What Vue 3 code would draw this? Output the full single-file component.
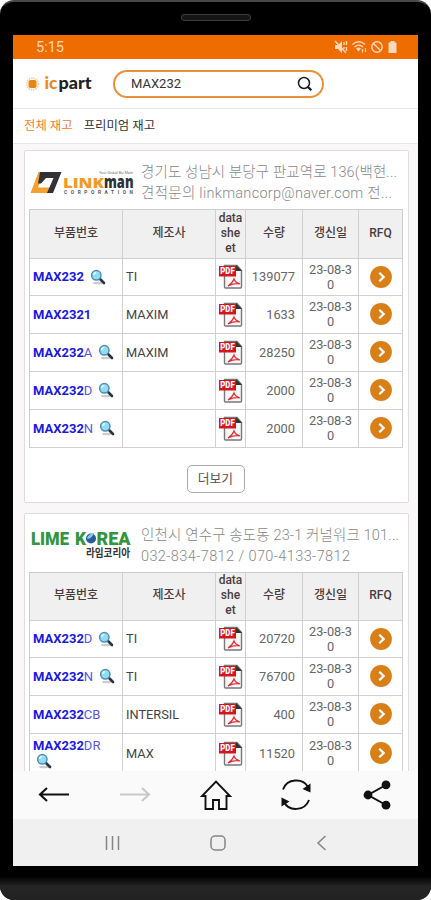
<script setup>
const columns = [['부품번호'], ['제조사'], ['data', 'she', 'et'], ['수량'], ['갱신일'], ['RFQ']]
const suppliers = [
  {
    id: 'linkman',
    lines: ['경기도 성남시 분당구 판교역로 136(백현...', '견적문의 linkmancorp@naver.com 전...'],
    widths: [256, 251],
    more: true,
    rows: [
      { suffix: '', zoom: true, maker: 'TI', qty: '139077' },
      { suffix: '1', bold: true, maker: 'MAXIM', qty: '1633' },
      { suffix: 'A', zoom: true, maker: 'MAXIM', qty: '28250' },
      { suffix: 'D', zoom: true, maker: '', qty: '2000' },
      { suffix: 'N', zoom: true, maker: '', qty: '2000' }
    ]
  },
  {
    id: 'lime',
    lines: ['인천시 연수구 송도동 23-1 커널워크 101...', '032-834-7812 / 070-4133-7812'],
    widths: [258, 209],
    rows: [
      { suffix: 'D', zoom: true, maker: 'TI', qty: '20720' },
      { suffix: 'N', zoom: true, maker: 'TI', qty: '76700' },
      { suffix: 'CB', maker: 'INTERSIL', qty: '400' },
      { suffix: 'DR', zoom: true, maker: 'MAX', qty: '11520' }
    ]
  }
]
</script>

<template>
  <div class="phone">
    <div class="bezel"><span class="speaker"></span></div>
    <div class="screen">
      <div class="status">
        <span class="clock">5:15</span>
        <svg width="64" height="16" viewBox="0 0 64 16" fill="none" stroke="#ffd9bd" stroke-width="1.4">
          <path d="M1 6h3l4-4v12l-4-4H1z" fill="#ffd9bd" stroke="none" />
          <path d="M1 2l11 12M10 3v3M12.5 2v4M10 8v2M12.5 8v4" />
          <path d="M18.5 5.5c4-3.4 8.500-3.400 12.500 0M20.500 8c2.500-2.200 6-2.200 8.500 0" />
          <path d="M22 9.500c2-1.500 3.500-1.500 5 0l-2.500 3z" fill="#ffd9bd" stroke="none" />
          <path d="M28.500 10v3.500M31.500 9v4" stroke-width="1.200" />
          <circle cx="43" cy="8" r="5.200" />
          <path d="M39.500 4.500l7 7" />
          <path d="M54.500 3.500h2V2h4v1.500h2V14h-8z" fill="#ffd9bd" stroke="none" />
        </svg>
      </div>
      <header class="header">
        <svg class="brand" width="70" height="24" viewBox="0 0 70 24">
          <circle cx="7.500" cy="12" r="5.800" fill="none" stroke="#f8cfa0" stroke-width="2" stroke-dasharray="1.300 1" />
          <rect x="3.500" y="8" width="8" height="8" rx="2" fill="#e5861a" />
          <text x="19.500" y="17" textLength="13" lengthAdjust="spacingAndGlyphs" class="brand-ic">ic</text>
          <text x="33.500" y="17" textLength="33" lengthAdjust="spacingAndGlyphs" class="brand-part">part</text>
        </svg>
        <div class="search">
          <span>MAX232</span>
          <svg width="16" height="16" viewBox="0 0 16 16" fill="none" stroke="#1a1a1a">
            <circle cx="7" cy="7" r="5.500" stroke-width="1.500" />
            <path d="M10.500 10.500l3.800 3.800" stroke-width="2.300" />
          </svg>
        </div>
      </header>
      <nav class="tabs"><span class="active">전체 재고</span><span>프리미엄 재고</span></nav>
      <main class="content">
        <section v-for="s in suppliers" :key="s.id" class="card" :class="s.id">
          <div class="supplier">
            <svg v-if="s.id === 'linkman'" class="logo" width="106" height="30" viewBox="0 0 106 30">
              <path d="M8.500 2H14L8 17.500h14L19.500 23H.5z" fill="#f4a12f" />
              <path d="M10 2h21.500l-8.500 21h-6l6.500-15h-7.500l-5 5.500H8z" fill="#303238" />
              <text x="69" y="4" font-size="3.500" textLength="34" lengthAdjust="spacingAndGlyphs" fill="#777">Your Global Biz Mate</text>
              <text x="33" y="17.500" textLength="41" lengthAdjust="spacingAndGlyphs" class="link-text">LINK</text>
              <text x="74" y="17.500" textLength="29.500" lengthAdjust="spacingAndGlyphs" class="man-text">man</text>
              <text x="34" y="23.500" textLength="69" font-size="4.800" font-weight="700" fill="#555">CORPORATION</text>
            </svg>
            <svg v-else class="logo" width="106" height="36" viewBox="0 0 106 36">
              <text x="1" y="16.500" textLength="38" lengthAdjust="spacingAndGlyphs" class="lime-text">LIME</text>
              <text x="45" y="16.500" textLength="11" lengthAdjust="spacingAndGlyphs" class="lime-text">K</text>
              <circle cx="61" cy="10.500" r="5" fill="#225f9c" />
              <path d="M57 10c2-4 4-4 7-5-2 4-3 5-6 6z" fill="#9cc6e2" />
              <text x="66.500" y="16.500" textLength="34" lengthAdjust="spacingAndGlyphs" class="lime-text">REA</text>
              <text x="56" y="28.500" textLength="44" lengthAdjust="spacingAndGlyphs" class="lime-ko">라임코리아</text>
            </svg>
            <svg class="address" width="262" height="44" viewBox="0 0 262 44">
              <text v-for="(line, i) in s.lines" :key="line" x="1" :y="16.500 + i * 21" :textLength="s.widths[i]">{{ line }}</text>
            </svg>
          </div>
          <div class="table">
            <div class="row head">
              <div v-for="(c, i) in columns" :key="i" class="cell">
                <span v-for="part in c" :key="part">{{ part }}</span>
              </div>
            </div>
            <div v-for="(r, i) in s.rows" :key="i" class="row">
              <div class="cell part">
                <span class="name"><b>MAX232</b><b v-if="r.bold">{{ r.suffix }}</b><i v-else>{{ r.suffix }}</i></span>
                <svg v-if="r.zoom" class="glass" width="16" height="16" viewBox="0 0 16 16">
                  <ellipse cx="8" cy="14" rx="5" ry="1.300" fill="#ccc" />
                  <path d="M9.500 9.500l4.500 4.500" stroke="#263348" stroke-width="2.600" stroke-linecap="round" />
                  <circle cx="6.300" cy="6.300" r="4.700" fill="#8edcf5" stroke="#568cae" stroke-width="1.500" />
                  <path d="M3.700 6c.2-1.500 1.200-2.400 2.700-2.500" fill="none" stroke="#e2fbff" stroke-width="1.500" />
                </svg>
              </div>
              <div class="cell maker">{{ r.maker }}</div>
              <div class="cell">
                <svg width="25" height="25" viewBox="0 0 25 25">
                  <path d="M6.500 1.500h12.500l4.500 5v16.500q0 1-1 1h-15q-1 0-1-1z" fill="#f8f8f8" stroke="#777" stroke-width="1.400" />
                  <path d="M18 1l6 6h-6z" fill="#333" />
                  <path d="M10 22c3-2 5-4 6-7 1 3 3 4 6 5-4-1-8 0-12 2" fill="none" stroke="#df3038" stroke-width="1.200" />
                  <rect x="1" y="2" width="17" height="10.500" fill="#d5141d" />
                  <text x="2.200" y="10.200" font-size="8.500" font-weight="900" textLength="14.500" lengthAdjust="spacingAndGlyphs" fill="#fff">PDF</text>
                </svg>
              </div>
              <div class="cell qty">{{ r.qty }}</div>
              <div class="cell date"><span>23-08-3</span><span>0</span></div>
              <div class="cell">
                <svg width="22" height="22" viewBox="0 0 22 22">
                  <circle cx="11" cy="11" r="10.900" fill="#d97f18" />
                  <path d="M9.300 6.800l4.300 4.200-4.300 4.200" fill="none" stroke="#fff" stroke-width="2.300" />
                </svg>
              </div>
            </div>
          </div>
          <button v-if="s.more" class="more">더보기</button>
        </section>
      </main>
      <nav class="toolbar">
        <svg viewBox="0 0 32 32" stroke="#111" stroke-width="2.100"><path d="M31 15.500H2M9 9L2 15.500l7 6.500" /></svg>
        <svg viewBox="0 0 32 32" stroke="#c9c9c9" stroke-width="2.100"><path d="M1 15.500h29M23 9l7 6.500-7 6.500" /></svg>
        <svg viewBox="0 0 32 32" stroke="#111" stroke-width="1.900"><path d="M5.500 30V17H2L16 2.500 30 17h-3.500v13H19v-9h-6v9z" /></svg>
        <svg viewBox="0 0 32 32" stroke="#111" stroke-width="1.900">
          <path d="M3 10.500C7-1 23-1 28 8M29 21C25 32 9 33 4 23" />
          <path d="M30.500 4.500v9l-8-3.500zM1.500 27.500v-9l8 4z" fill="#111" stroke="none" />
        </svg>
        <svg viewBox="0 0 32 32" stroke="#111" stroke-width="2">
          <path d="M25 6L7 16l18 10" />
          <g fill="#111" stroke="none"><circle cx="25" cy="5.800" r="4.400" /><circle cx="7" cy="16" r="4.400" /><circle cx="25" cy="26.200" r="4.400" /></g>
        </svg>
      </nav>
      <nav class="system">
        <svg viewBox="0 0 18 18"><path d="M2.500 2v14M8.500 2v14M14.500 2v14" /></svg>
        <svg viewBox="0 0 18 18"><rect x="2" y="2" width="14" height="14" rx="4" /></svg>
        <svg viewBox="0 0 18 18"><path d="M12.500 2L5 9l7.500 7" /></svg>
      </nav>
    </div>
    <div class="chin"></div>
  </div>
</template>

<style>
body { background: #fff; }
</style>

<style scoped>
* { box-sizing: border-box; }
svg { display: block; flex: none; }
.phone { width: 431px; height: 900px; background: #000; border-radius: 14px; border-top: 2px solid #484848; overflow: hidden; font-family: Roboto, "Noto Sans CJK KR", sans-serif; color: #444; }
.bezel { height: 33px; display: flex; justify-content: center; padding-top: 12px; }
.speaker { width: 70px; height: 7px; border: 1px solid #3c3c3c; border-radius: 3px; background: #151515; }
.screen { width: 405px; height: 831px; margin-left: 13px; background: #fff; display: flex; flex-direction: column; }
.status { height: 24px; flex: none; background: #ef6c00; display: flex; align-items: center; justify-content: space-between; padding: 0 20px 0 23px; }
.clock { color: #ffd9bd; font-size: 14.5px; padding-top: 1px; }
.header { height: 50px; flex: none; border-bottom: 1px solid #e8e8e8; display: flex; align-items: center; padding-left: 12px; }
.brand-ic, .brand-part { font-family: Lato, sans-serif; font-weight: 900; font-size: 16.5px; fill: #ea8a1e; }
.brand-part { fill: #222; }
.search { width: 211px; height: 28px; margin-left: 18px; border: 2px solid #ea9136; border-radius: 14px; display: flex; align-items: center; justify-content: space-between; padding: 0 9px 0 16px; font-size: 13px; color: #333; }
.tabs { height: 35px; flex: none; border-bottom: 1px solid #e8e8e8; display: flex; align-items: center; gap: 11px; padding: 0 0 3px 11px; font-size: 12.4px; color: #333; }
.active { color: #f57b2c; }
.content { height: 627px; flex: none; background: #f9f7f8; overflow: hidden; padding: 6px 9px 0 11px; display: flex; flex-direction: column; gap: 10px; }
.card { flex: none; height: 353px; border: 1px solid #ddd; background: #fff; padding: 0 5px; border-radius: 2px; }
.supplier { height: 58px; display: flex; align-items: flex-start; }
.logo { margin-top: 19px; }
.lime .logo { margin-top: 14px; }
.address { margin: 9px 0 0 4px; font-size: 14.5px; fill: #888; overflow: visible; font-weight: 300; }
.link-text { font-size: 13.5px; font-weight: 800; font-family: "Open Sans", sans-serif; fill: #f29a27; }
.man-text { font-size: 17px; font-weight: 800; font-family: "Open Sans", sans-serif; fill: #303238; }
.lime-text { font-size: 18.5px; font-weight: 900; fill: #34953f; }
.lime-ko { font-family: "Noto Sans CJK KR", sans-serif; font-size: 11px; font-weight: 700; fill: #333; }
.table { width: 374px; border-top: 1px solid #ccc; border-left: 1px solid #ccc; margin-left: -1px; }
.row { display: grid; grid-template-columns: 93px 93px 30px 57px 56px 44px; height: 38px; }
.row:nth-child(2) { height: 37px; }
.row.head { height: 49px; background: #f0f0f0; }
.lime .row.head { height: 48px; }
.lime .row:nth-child(4) { height: 38px; }
.lime .row:last-child { height: 40px; }
.cell { min-width: 0; border-right: 1px solid #d0d0d0; border-bottom: 1px solid #d0d0d0; display: flex; align-items: center; justify-content: center; font-size: 12.8px; }
.row:not(.head) .cell { padding-bottom: 1px; }
.head .cell { flex-direction: column; font-size: 12px; line-height: 15px; font-weight: 500; color: #493c40; padding-bottom: 2px; }
.cell.part { justify-content: flex-start; padding-left: 3px; gap: 6px; color: #2018e0; align-content: center; font-size: 13px; }
.name b { font-weight: 700; }
.name i { font-style: normal; font-weight: 400; color: #5a54ea; }
.cell.maker { justify-content: flex-start; padding-left: 3px; font-size: 12.8px; }
.cell.qty { justify-content: flex-end; padding-right: 7px; color: #666; }
.cell.date { flex-direction: column; line-height: 15px; color: #666; }
.lime .row:last-child .part { flex-wrap: wrap; gap: 0 40px; }
.lime .row:last-child .glass { margin-left: 3px; }
.more { display: block; width: 58px; height: 28px; margin: 17px auto 0; padding: 0 0 3px; border: 1px solid #aaa; border-radius: 5px; background: #fff; font-family: inherit; font-size: 12.8px; color: #555; position: relative; left: -1px; }
.toolbar { height: 48px; flex: none; background: #fafafa; display: flex; align-items: center; justify-content: space-between; padding: 0 25px 0 25px; }
.toolbar svg { width: 32px; height: 32px; fill: none; }
.system { height: 47px; flex: none; background: #f0f0f0; display: flex; align-items: center; justify-content: space-between; padding: 0 87px 0 91px; }
.system svg { width: 18px; height: 18px; fill: none; stroke: #858585; stroke-width: 1.5; }
.chin { height: 34px; background: linear-gradient(#000 30%, #252525 60%, #222); }
</style>
